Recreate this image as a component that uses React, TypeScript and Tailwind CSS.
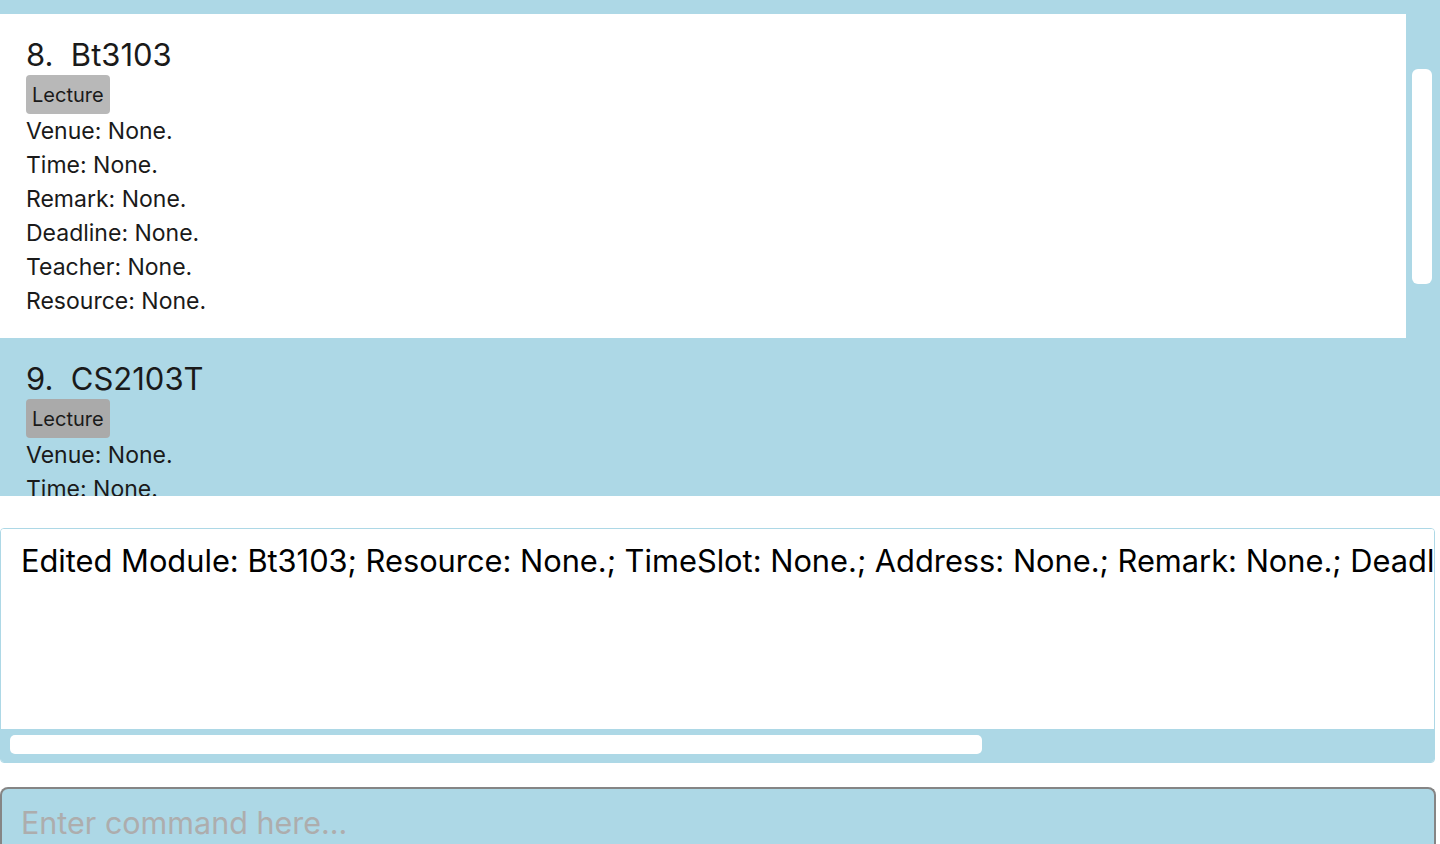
import React from 'react';

type Module = { index: number; code: string; tag: string; selected?: boolean };

const modules: Module[] = [
  { index: 8, code: 'Bt3103', tag: 'Lecture' },
  { index: 9, code: 'CS2103T', tag: 'Lecture', selected: true },
];

const FIELDS = ['Venue', 'Time', 'Remark', 'Deadline', 'Teacher', 'Resource'];

const ModuleCard = ({ mod }: { mod: Module }) => (
  <div className={`shrink-0 px-[26px] pt-[22px] pb-[20px] ${mod.selected ? 'bg-[#add8e6]' : 'bg-white'}`}>
    <div className="text-[31px] leading-[38px] text-[#1a1a1a]">
      {mod.index}.&nbsp;&nbsp;{mod.code}
    </div>
    <div className="flex pt-[1px]">
      <span
        className={`rounded-[4px] px-[6px] h-[39px] flex items-center text-[20px] text-[#1a1a1a] ${
          mod.selected ? 'bg-[#aaaaaa]' : 'bg-[#b8b8b8]'
        }`}
      >
        {mod.tag}
      </span>
    </div>
    {FIELDS.map(f => (
      <div key={f} className="text-[23px] leading-[34px] text-[#1a1a1a]">
        {f}: None.
      </div>
    ))}
  </div>
);

export default function App() {
  return (
    <div className="h-[844px] overflow-hidden bg-white flex flex-col" style={{ fontFamily: 'Inter, "Noto Sans", sans-serif' }}>
      {/* module list */}
      <div className="h-[496px] shrink-0 bg-[#add8e6] flex">
        <div className="flex-1 flex flex-col pt-[14px] overflow-hidden">
          {modules.map(m => (
            <ModuleCard key={m.index} mod={m} />
          ))}
        </div>
        <div className="w-[34px] shrink-0 pt-[69px] pl-[6px] pr-[8px]">
          <div className="h-[215px] bg-white rounded-[6px]" />
        </div>
      </div>

      {/* result display */}
      <div className="mt-[32px] w-[1435px] h-[235px] shrink-0 border border-[#add8e6] rounded-[4px] flex flex-col overflow-hidden">
        <div className="flex-1 bg-white overflow-hidden pl-[20px] pt-[12px]">
          <div className="whitespace-nowrap text-[30.8px] leading-[40px] text-black">
            Edited Module: Bt3103; Resource: None.; TimeSlot: None.; Address: None.; Remark: None.; Deadline: None.; Teacher: None.
          </div>
        </div>
        <div className="h-[33px] bg-[#add8e6] pl-[9px] pt-[6px]">
          <div className="w-[972px] h-[19px] bg-white rounded-[5px]" />
        </div>
      </div>

      {/* command box */}
      <div className="mt-[24px] w-[1436px] flex-1 bg-[#add8e6] border-t-2 border-l-2 border-r-2 border-[#858585] rounded-t-[8px] pl-[19px] pt-[14px]">
        <div className="text-[30.5px] leading-[40px] text-[#adadad]">Enter command here...</div>
      </div>
    </div>
  );
}
